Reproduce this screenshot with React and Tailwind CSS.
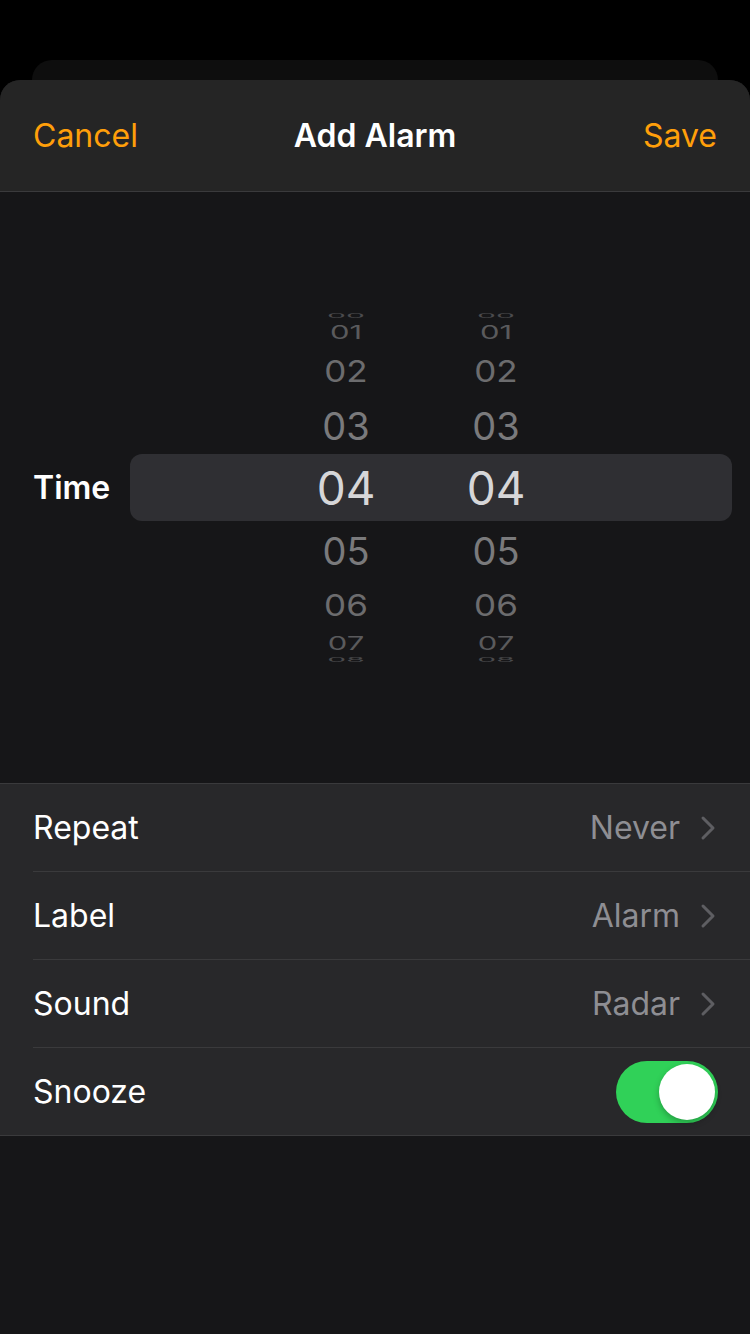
import React from 'react';

const font = { fontFamily: 'Inter, "Liberation Sans", sans-serif' };

// picker wheel rows above and below the selection bar
const above = [
  { n: '00', h: 'h-[8px]', cls: 'text-[30px] scale-y-[0.22] text-[#4a4a4c]' },
  { n: '01', h: 'h-[24px]', cls: 'text-[31px] scale-y-[0.6] text-[#5a5a5c]' },
  { n: '02', h: 'h-[54px]', cls: 'text-[35px] scale-y-[0.85] text-[#6c6c6e]' },
  { n: '03', h: 'h-[56px]', cls: 'text-[38px] text-[#7a7a7c]' },
];
const below = [
  { n: '05', h: 'h-[60px]', cls: 'text-[38px] text-[#7a7a7c]' },
  { n: '06', h: 'h-[48px]', cls: 'text-[35px] scale-y-[0.85] text-[#6c6c6e]' },
  { n: '07', h: 'h-[28px]', cls: 'text-[31px] scale-y-[0.6] text-[#5a5a5c]' },
  { n: '08', h: 'h-[6px]', cls: 'text-[30px] scale-y-[0.22] text-[#4a4a4c]' },
];

const WheelRow = ({ n, h, cls }) => (
  <div className={`flex ${h} items-center overflow-visible`}>
    <div className="w-[271px] shrink-0" />
    {[0, 1].map((i) => (
      <div key={i} className="w-[150px] shrink-0 flex justify-center">
        <span className={`block leading-none ${cls}`}>{n}</span>
      </div>
    ))}
  </div>
);

const Chevron = () => (
  <svg width="16" height="26" viewBox="0 0 16 26" fill="none">
    <path d="M3 3 L13 13 L3 23" stroke="#5e5e62" strokeWidth="3" strokeLinecap="round" strokeLinejoin="round" />
  </svg>
);

const rows = [
  { label: 'Repeat', value: 'Never' },
  { label: 'Label', value: 'Alarm' },
  { label: 'Sound', value: 'Radar' },
];

export default function App() {
  return (
    <div className="w-[750px] h-[1334px] bg-black flex flex-col overflow-hidden" style={font}>
      {/* stacked card behind the sheet */}
      <div className="h-[60px] shrink-0" />
      <div className="h-[20px] shrink-0 mx-[32px] rounded-t-[20px] bg-[#0e0e0e]" />

      {/* sheet */}
      <div className="flex-1 flex flex-col rounded-t-[20px] overflow-hidden bg-[#161618]">
        <div className="h-[112px] shrink-0 bg-[#252525] border-b border-[#3a3a3c] flex items-center justify-between px-[33px] relative">
          <span className="text-[32px] text-[#ff9f0a]">Cancel</span>
          <span className="absolute left-0 right-0 text-center text-[32px] font-semibold text-white pointer-events-none">Add Alarm</span>
          <span className="text-[32px] text-[#ff9f0a]">Save</span>
        </div>

        {/* time picker */}
        <div className="h-[591px] shrink-0 flex flex-col justify-center">
          {above.map((r) => (
            <WheelRow key={r.n} {...r} />
          ))}
          <div className="flex h-[67px] items-center">
            <div className="w-[130px] shrink-0 pl-[33px] text-[32px] font-semibold text-white">Time</div>
            <div className="flex-1 mr-[18px] h-full rounded-[12px] bg-[#2f2f33] flex items-center">
              <div className="w-[141px] shrink-0" />
              <div className="w-[150px] shrink-0 text-center text-[46px] leading-none text-[#d6d6d8]">04</div>
              <div className="w-[150px] shrink-0 text-center text-[46px] leading-none text-[#d6d6d8]">04</div>
            </div>
          </div>
          {below.map((r) => (
            <WheelRow key={r.n} {...r} />
          ))}
        </div>

        {/* settings list */}
        <div className="bg-[#28282a] border-t border-b border-[#3a3a3c]">
          {rows.map((r) => (
            <div key={r.label} className="pl-[33px]">
              <div className="h-[88px] flex items-center justify-between pr-[34px] border-b border-[#3a3a3c]">
                <span className="text-[32px] text-white">{r.label}</span>
                <div className="flex items-center gap-[20px]">
                  <span className="text-[32px] text-[#8e8e93]">{r.value}</span>
                  <Chevron />
                </div>
              </div>
            </div>
          ))}
          <div className="h-[87px] flex items-center justify-between pl-[33px] pr-[32px]">
            <span className="text-[32px] text-white">Snooze</span>
            <div className="w-[102px] h-[62px] rounded-full bg-[#30d158] flex items-center justify-end p-[3px]">
              <div className="w-[56px] h-[56px] rounded-full bg-white shadow-[0_3px_6px_rgba(0,0,0,0.25)]" />
            </div>
          </div>
        </div>
      </div>
    </div>
  );
}
